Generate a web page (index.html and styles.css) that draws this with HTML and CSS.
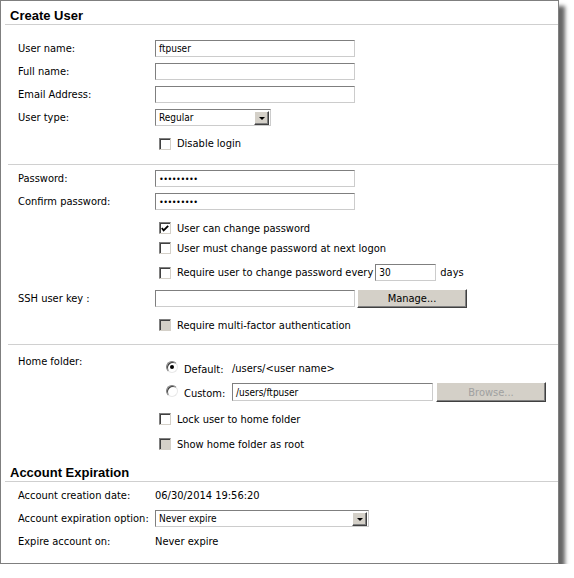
FILE: index.html
```html
<!DOCTYPE html>
<html>
<head>
<meta charset="utf-8">
<link rel="stylesheet" href="styles.css">
</head>
<body>
<div class="panel">
  <h2 class="heading">Create User</h2>

  <div class="sec sec-user">
    <div class="row"><span class="lbl">User name:</span><span class="input w200">ftpuser</span></div>
    <div class="row"><span class="lbl">Full name:</span><span class="input w200"></span></div>
    <div class="row"><span class="lbl">Email Address:</span><span class="input w200"></span></div>
    <div class="row"><span class="lbl">User type:</span><span class="select w116"><span class="sel-text">Regular</span><span class="sel-btn"></span></span></div>
    <div class="row row-chk gap3"><span class="lbl"></span><span class="chk-line"><span class="chk"></span>Disable login</span></div>
  </div>
  <hr class="sep">

  <div class="sec sec-pass">
    <div class="row"><span class="lbl">Password:</span><span class="input w200 dots">•••••••••</span></div>
    <div class="row"><span class="lbl">Confirm password:</span><span class="input w200 dots">•••••••••</span></div>
    <div class="row row-chk h20 gap5"><span class="lbl"></span><span class="chk-line"><span class="chk on"><svg viewBox="0 0 11 11" width="11" height="11"><path d="M2 5 L4 7.5 L9 2.5" fill="none" stroke="#000" stroke-width="2"/></svg></span>User can change password</span></div>
    <div class="row row-chk h20"><span class="lbl"></span><span class="chk-line"><span class="chk"></span>User must change password at next logon</span></div>
    <div class="row row-chk gap3"><span class="lbl"></span><span class="chk-line"><span class="chk"></span>Require user to change password every<span class="input w61">30</span><span class="after">days</span></span></div>
    <div class="row gap3"><span class="lbl">SSH user key :</span><span class="field"><span class="input w200"></span><span class="btn manage">Manage...</span></span></div>
    <div class="row row-chk h20 gap5"><span class="lbl"></span><span class="chk-line"><span class="chk dis"></span>Require multi-factor authentication</span></div>
  </div>
  <hr class="sep">

  <div class="sec sec-home">
    <span class="lbl home-lbl">Home folder:</span>
    <div class="home-opts">
      <div class="radio-row first"><span class="radio-lab"><span class="radio on"></span>Default:</span><span>/users/&lt;user name&gt;</span></div>
      <div class="radio-row custom"><span class="radio-lab"><span class="radio"></span>Custom:</span><span class="input w201">/users/ftpuser</span><span class="btn browse">Browse...</span></div>
      <div class="chk-line lock"><span class="chk"></span>Lock user to home folder</div>
      <div class="chk-line showroot"><span class="chk dis"></span>Show home folder as root</div>
    </div>
  </div>

  <h2 class="heading heading2">Account Expiration</h2>
  <div class="sec sec-exp">
    <div class="row"><span class="lbl">Account creation date:</span><span class="value">06/30/2014 19:56:20</span></div>
    <div class="row"><span class="lbl">Account expiration option:</span><span class="select w214"><span class="sel-text">Never expire</span><span class="sel-btn"></span></span></div>
    <div class="row"><span class="lbl">Expire account on:</span><span class="value">Never expire</span></div>
  </div>
</div>
</body>
</html>
```

FILE: styles.css
```css
html, body {
  margin: 0;
  padding: 0;
  background: #fff;
}

body {
  font-family: "DejaVu Sans Condensed", "DejaVu Sans", "Liberation Sans", sans-serif;
  font-size: 11px;
  color: #000;
}

.panel {
  width: 557px;
  border: 1px solid #7f7f7f;
  background: #fff;
  box-shadow: 6px 6px 4px rgba(0, 0, 0, 0.6);
  padding-bottom: 10px;
}

.heading {
  margin: 0 0 0 4px;
  height: 16px;
  padding: 7px 0 0 5px;
  line-height: 16px;
  font-family: "Liberation Sans", Arial, sans-serif;
  font-size: 13px;
  font-weight: bold;
  color: #000;
  border-bottom: 1px solid #cfcfcf;
}

.heading2 {
  margin-top: 4px;
}

.sep {
  margin: 0 0 0 7px;
  border: 0;
  border-top: 1px solid #d0d0d0;
  height: 0;
}

.sec {
  padding-left: 17px;
}

.sec-user {
  padding-top: 12px;
  padding-bottom: 9px;
}

.sec-pass {
  padding-top: 2px;
  padding-bottom: 9px;
}

.sec-exp {
  padding-top: 2px;
}

.row {
  display: grid;
  grid-template-columns: 137px 1fr;
  align-items: center;
  height: 23px;
}

.row.h20 {
  height: 20px;
}

.gap3 {
  margin-top: 3px;
}

.gap5 {
  margin-top: 5px;
}

.lbl {
  white-space: nowrap;
}

.field {
  display: flex;
  align-items: center;
  gap: 2px;
}

.input {
  box-sizing: border-box;
  display: inline-flex;
  align-items: center;
  height: 17px;
  padding-left: 3px;
  border: 1px solid;
  border-color: #7f7f7f #cccccc #cccccc #7f7f7f;
  background: #fff;
  white-space: nowrap;
  overflow: hidden;
  font-size: 10px;
}

.w200 { width: 200px; }
.w201 { width: 201px; height: 18px; }
.w61 { width: 61px; }
.w116 { width: 116px; }
.w214 { width: 214px; }

.dots {
  font-size: 9px;
  letter-spacing: -0.5px;
}

.select {
  box-sizing: border-box;
  display: inline-flex;
  align-items: center;
  justify-content: space-between;
  height: 17px;
  border: 1px solid;
  border-color: #7f7f7f #cccccc #cccccc #7f7f7f;
  background: #fff;
  padding-left: 3px;
  padding-right: 1px;
}

.sel-text {
  font-size: 10px;
}

.sel-btn {
  position: relative;
  box-sizing: border-box;
  width: 15px;
  height: 14px;
  background: #d4d0c8;
  border: 1px solid;
  border-color: #ffffff #404040 #404040 #ffffff;
  box-shadow: inset -1px -1px 0 #808080;
}

.sel-btn::after {
  content: "";
  position: absolute;
  left: 4px;
  top: 5px;
  border-left: 3px solid transparent;
  border-right: 3px solid transparent;
  border-top: 3px solid #000;
}

.chk-line {
  display: flex;
  align-items: center;
  white-space: nowrap;
}

.row-chk .chk-line {
  padding-left: 4px;
}

.chk {
  box-sizing: border-box;
  flex: none;
  width: 12px;
  height: 12px;
  margin-right: 6px;
  border: 1px solid;
  border-color: #808080 #d4d0c8 #d4d0c8 #808080;
  box-shadow: inset 1px 1px 0 #404040;
  background: #fff;
  display: flex;
  align-items: center;
  justify-content: center;
}

.chk svg {
  display: block;
}

.chk.dis {
  background: #d4d0c8;
}

.chk-line .input {
  margin-left: 2px;
}

.after {
  margin-left: 4px;
}

.btn {
  box-sizing: border-box;
  display: inline-flex;
  align-items: center;
  justify-content: center;
  width: 110px;
  height: 19px;
  background: #d4d0c8;
  border: 1px solid;
  border-color: #ffffff #404040 #404040 #ffffff;
  box-shadow: inset -1px -1px 0 #808080;
}

.manage {
  color: #000;
}

.browse {
  color: #a0a0a0;
  margin-left: 3px;
  height: 20px;
}

.sec-home {
  display: grid;
  grid-template-columns: 137px 1fr;
}

.home-lbl {
  padding-top: 10px;
  line-height: 14px;
  align-self: start;
}

.radio-row {
  display: flex;
  align-items: center;
  height: 20px;
}

.radio-row.first {
  margin-top: 13px;
}

.radio-row.custom {
  margin-top: 4px;
}

.radio-lab {
  display: flex;
  align-items: center;
  width: 66px;
  padding-left: 11px;
  white-space: nowrap;
  padding-top: 3px;
}

.radio {
  position: relative;
  box-sizing: border-box;
  flex: none;
  width: 12px;
  height: 12px;
  margin: -5px 6px 0 0;
  border-radius: 50%;
  border: 1px solid;
  border-color: #808080 #e8e8e8 #e8e8e8 #808080;
  box-shadow: inset 1px 1px 0 #404040;
  background: #fff;
}

.radio.on::after {
  content: "";
  position: absolute;
  left: 3px;
  top: 3px;
  width: 4px;
  height: 4px;
  border-radius: 50%;
  background: #000;
}

.lock {
  height: 20px;
  margin-top: 7px;
  padding-left: 4px;
}

.showroot {
  height: 20px;
  margin-top: 5px;
  padding-left: 4px;
}

.value {
  white-space: nowrap;
}
```
